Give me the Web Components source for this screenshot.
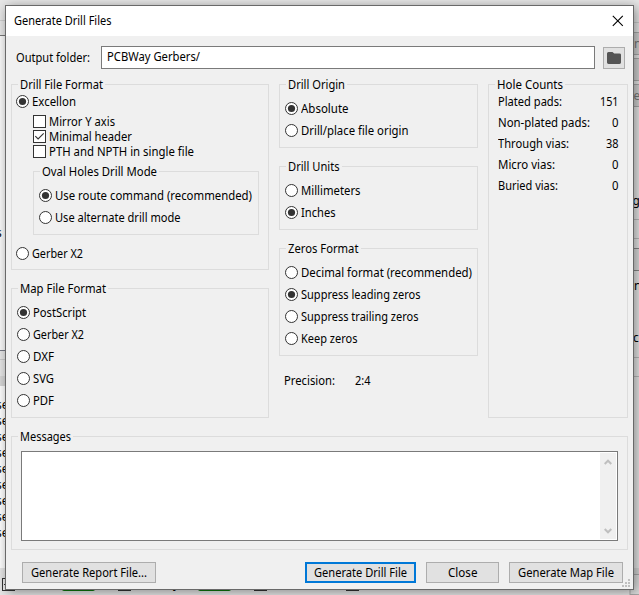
<!DOCTYPE html>
<html lang="en"><head><meta charset="utf-8"><title>Generate Drill Files</title>
<style>
html,body{margin:0;height:100%;overflow:hidden}
body{position:relative;width:639px;height:595px;background:#e6e6e6;color:#000;font:12px/15px "Noto Sans","Open Sans",sans-serif}
</style></head><body>
<parent-window></parent-window>
<drill-dialog></drill-dialog>
<script>
const define=(name,html,after)=>customElements.define(name,class extends HTMLElement{
  connectedCallback(){
    if(this.shadowRoot)return;
    const t=document.createElement('template');
    t.innerHTML=typeof html==='function'?html(this):html;
    this.attachShadow({mode:'open'}).append(t.content.cloneNode(true));
    if(after)after(this);
  }
});

// A one-line label, condensed so that it spans the width in its "w" attribute.
define('ui-text',e=>`<style>:host{display:block;flex:none;white-space:pre;height:16px}span{display:inline-block;margin-top:-1px;transform-origin:0 50%}</style><span>${e.getAttribute('t')}</span>`,e=>{
  const s=e.shadowRoot.querySelector('span'),w=+e.getAttribute('w');
  if(w){const n=s.getBoundingClientRect().width;s.style.transform=`scaleX(${w/n})`;e.style.width=w+'px';}
});

define('ui-group',e=>`<style>
:host{display:flex;flex-direction:column;box-sizing:border-box;border:1px solid #dcdcdc;min-width:0}
.legend{align-self:flex-start;height:15px;margin:-8px 0 0 6px;padding:0 2px 0 2px;background:#f0f0f0;display:flex}
</style><div class="legend"><ui-text t="${e.getAttribute('label')}" w="${e.getAttribute('w')}"></ui-text></div><slot></slot>`);

define('ui-radio',e=>`<style>
:host{display:flex;align-items:center;height:22px;flex:none}
svg{flex:none;margin:0 3px 1px 0}
</style><svg width="13" height="13" viewBox="0 0 13 13"><circle cx="6.5" cy="6.5" r="6" fill="#fff" stroke="#333"/>${e.hasAttribute('on')?'<circle cx="6.5" cy="6.5" r="3.6" fill="#333"/>':''}</svg><ui-text t="${e.getAttribute('t')}" w="${e.getAttribute('w')}"></ui-text>`);

define('ui-check',e=>`<style>
:host{display:flex;align-items:center;height:15px;flex:none}
svg{flex:none;margin-right:3px}
ui-text{margin-top:1px}
</style><svg width="13" height="13" viewBox="0 0 13 13"><rect x=".5" y=".5" width="12" height="12" fill="#fff" stroke="#333"/>${e.hasAttribute('on')?'<path d="M2.3 6.2l2.8 2.8 5.6-5.6" fill="none" stroke="#333" stroke-width="1.1"/>':''}</svg><ui-text t="${e.getAttribute('t')}" w="${e.getAttribute('w')}"></ui-text>`);

define('ui-button',e=>`<style>
:host{display:flex;justify-content:center;align-items:center;box-sizing:border-box;height:21px;padding-top:1px;background:#e1e1e1;border:1px solid #adadad;flex:none}
:host([primary]){border:2px solid #0078d7}
</style><ui-text t="${e.getAttribute('t')}" w="${e.getAttribute('w')}"></ui-text>`);

define('count-row',e=>`<style>
:host{display:flex;justify-content:space-between;align-items:center;box-sizing:border-box;height:21px;padding:0 9px 1px 9px}
</style><ui-text t="${e.getAttribute('t')}" w="${e.getAttribute('w')}"></ui-text><ui-text t="${e.getAttribute('v')}" w="${e.getAttribute('vw')}"></ui-text>`);

define('message-box',`<style>
:host{display:flex;justify-content:flex-end;box-sizing:border-box;border:1px solid #7a7a7a;background:#fff;padding:1px}
.bar{width:16px;background:#f0f0f0;display:flex;flex-direction:column;justify-content:space-between;align-items:center;padding:6px 0 5px;box-sizing:border-box}
</style><div class="bar"><svg width="8" height="6"><path d="M.7 5L4 1.7 7.3 5" fill="none" stroke="#bfbfbf" stroke-width="2"/></svg><svg width="8" height="6"><path d="M.7 1L4 4.3 7.3 1" fill="none" stroke="#bfbfbf" stroke-width="2"/></svg></div>`);

// The window behind the dialog: only its margins are visible.
define('parent-window',()=>{
  let rows='';
  for(let i=0;i<9;i++)rows+=`<text x="-4" y="${409+i*16}">se</text>`;
  return `<style>:host{display:block;width:639px;height:595px}svg{display:block}text{font:12px "Noto Sans",sans-serif;fill:#000}</style>
<svg width="639" height="595">
<rect width="639" height="595" fill="#e7e7e7"/>
<rect y="20" width="6" height="1" fill="#cfcfcf"/>
<rect y="35" width="6" height="316" fill="#fafafa"/><rect y="35" width="6" height="1" fill="#777"/>
<rect y="350" width="6" height="1" fill="#777985"/><rect y="359" width="6" height="1" fill="#ccc"/><rect y="376" width="6" height="10" fill="#d8d8d8"/>
<rect y="386" width="6" height="182" fill="#fff"/>
<text x="-4" y="237">s</text>${rows}
<rect x="2.5" y="578.5" width="12" height="12" fill="#eee" stroke="#333"/><path d="M4 584l3 3" stroke="#333"/>
<rect x="118.5" y="578.5" width="12" height="12" fill="#eee" stroke="#333"/>
<rect x="254.5" y="578.5" width="12" height="12" fill="#eee" stroke="#333"/>
<rect x="346.5" y="578.5" width="12" height="12" fill="#eee" stroke="#333"/>
<rect x="62" y="576" width="33" height="15" rx="2" fill="#0b7a0b"/><rect x="198" y="576" width="33" height="15" rx="2" fill="#0b7a0b"/>
<text x="173" y="588">y</text>
<rect x="634" y="22" width="5" height="1" fill="#ccc"/>
<g fill="#d2d2d2" stroke="#aaa"><rect x="630" y="32.5" width="20" height="22"/><rect x="630" y="58.5" width="20" height="22"/><rect x="630" y="84.5" width="20" height="22"/></g>
<text x="634" y="48" style="fill:#777">n</text><text x="633.5" y="100" style="fill:#777">e</text>
<text x="632.5" y="205">g</text>
<rect x="634" y="219" width="5" height="1" fill="#bbb"/><rect x="634" y="238" width="5" height="1" fill="#bbb"/>
<rect x="630" y="248.5" width="20" height="22" fill="#ddd" stroke="#888"/>
<text x="634" y="290">n</text><text x="633" y="342">co</text>
<rect x="634" y="357" width="5" height="1" fill="#bbb"/><rect x="634" y="376" width="5" height="1" fill="#bbb"/>
<rect x="634" y="568" width="5" height="27" fill="#d5d5d5"/>
<rect x="630" y="574.5" width="20" height="20" fill="#ddd" stroke="#aaa"/>
</svg>`});

define('drill-dialog',`<style>
:host{position:absolute;left:5px;top:5px;width:629px;height:585px;box-sizing:border-box;border:1px solid #696969;background:#f0f0f0;box-shadow:2px 2px 11px rgba(0,0,0,.42);display:flex;flex-direction:column}
header{height:30px;background:#fff;display:flex;align-items:center;justify-content:space-between;padding:0 9px 0 8px;flex:none}
.path{display:flex;align-items:center;height:23px;padding:10px 8px 0 10px;flex:none}
.path>ui-text{margin-top:1px}
.input{box-sizing:border-box;width:494px;height:23px;border:1px solid #7a7a7a;background:#fff;padding:2px 5px 0;margin-left:11px;flex:none}
.browse{box-sizing:border-box;width:22px;height:22px;margin:1px 0 0 8px;border:1px solid #adadad;background:#e1e1e1;display:flex;align-items:center;justify-content:center;flex:none}
.cols{display:grid;grid-template-columns:258px 199px 140px;column-gap:10px;padding:15px 5px 0;height:334px;flex:none}
.col{display:flex;flex-direction:column;gap:18px}
.checks{padding:2px 0 0 21px}
.prec{display:flex;padding:0 5px;margin-top:-1px}
.prec ui-text+ui-text{margin-left:20px}
.msgs{margin:18px 5px 0;height:114px;flex:none}
message-box{height:90px;margin:7px 9px 0}
footer{display:flex;gap:10px;padding:12px 10px 0 16px;height:21px}
.grip{position:absolute;right:3px;bottom:2px}
</style>
<header><ui-text t="Generate Drill Files" w="97.5"></ui-text><svg width="12" height="12"><path d="M.8.8l10 10M10.8.8l-10 10" stroke="#000" stroke-width="1.1"/></svg></header>
<div class="path"><ui-text t="Output folder:" w="74"></ui-text><div class="input"><ui-text t="PCBWay Gerbers/" w="93"></ui-text></div>
<div class="browse"><svg width="14" height="12"><path d="M1.5 0H5.5L7.2 1.4H12.5Q14 1.4 14 2.8V10.6Q14 12 12.5 12H1.5Q0 12 0 10.6V1.5Q0 0 1.5 0Z" fill="#545454"/></svg></div></div>
<div class="cols">
 <div class="col">
  <ui-group label="Drill File Format" w="83" style="height:186px">
   <ui-radio on t="Excellon" w="44" style="height:20px;margin-left:4px"></ui-radio>
   <div class="checks"><ui-check t="Mirror Y axis" w="66"></ui-check><ui-check on t="Minimal header" w="83"></ui-check><ui-check t="PTH and NPTH in single file" w="145"></ui-check></div>
   <ui-group label="Oval Holes Drill Mode" w="115" style="margin:12px 9px 0 21px;height:64px;flex:none">
    <ui-radio on t="Use route command (recommended)" w="197" style="margin:6px 0 0 5px"></ui-radio><ui-radio t="Use alternate drill mode" w="125.5" style="margin-left:5px"></ui-radio>
   </ui-group>
   <ui-radio t="Gerber X2" w="51" style="margin:8px 0 0 4px"></ui-radio>
  </ui-group>
  <ui-group label="Map File Format" w="86" style="height:130px">
   <ui-radio on t="PostScript" w="53" style="margin:6px 0 0 5px"></ui-radio><ui-radio t="Gerber X2" w="51" style="margin-left:5px"></ui-radio><ui-radio t="DXF" w="21" style="margin-left:5px"></ui-radio><ui-radio t="SVG" w="21" style="margin-left:5px"></ui-radio><ui-radio t="PDF" w="21" style="margin-left:5px"></ui-radio>
  </ui-group>
 </div>
 <div class="col">
  <ui-group label="Drill Origin" w="57" style="height:64px"><ui-radio on t="Absolute" w="47.5" style="margin:6px 0 0 5px"></ui-radio><ui-radio t="Drill/place file origin" w="107.5" style="margin-left:5px"></ui-radio></ui-group>
  <ui-group label="Drill Units" w="51.5" style="height:64px"><ui-radio t="Millimeters" w="59.5" style="margin:6px 0 0 5px"></ui-radio><ui-radio on t="Inches" w="34.5" style="margin-left:5px"></ui-radio></ui-group>
  <ui-group label="Zeros Format" w="70.5" style="height:108px"><ui-radio t="Decimal format (recommended)" w="171" style="margin:6px 0 0 5px"></ui-radio><ui-radio on t="Suppress leading zeros" w="119.5" style="margin-left:5px"></ui-radio><ui-radio t="Suppress trailing zeros" w="117.5" style="margin-left:5px"></ui-radio><ui-radio t="Keep zeros" w="56.5" style="margin-left:5px"></ui-radio></ui-group>
  <div class="prec"><ui-text t="Precision:" w="51"></ui-text><ui-text t="2:4" w="15.5"></ui-text></div>
 </div>
 <ui-group label="Hole Counts" w="66">
  <count-row t="Plated pads:" w="64" v="151" vw="18.5"></count-row><count-row t="Non-plated pads:" w="92" v="0" vw="6.5"></count-row><count-row t="Through vias:" w="71" v="38" vw="12.5"></count-row><count-row t="Micro vias:" w="57" v="0" vw="6.5"></count-row><count-row t="Buried vias:" w="60" v="0" vw="6.5"></count-row>
 </ui-group>
</div>
<ui-group class="msgs" label="Messages" w="51"><message-box></message-box></ui-group>
<footer><ui-button t="Generate Report File..." w="116" style="width:134px;margin-right:139px"></ui-button><ui-button primary t="Generate Drill File" w="93" style="width:111px"></ui-button><ui-button t="Close" w="29.5" style="width:73px"></ui-button><ui-button t="Generate Map File" w="96" style="width:114px"></ui-button></footer>
<svg class="grip" width="8" height="8" fill="#bfbfbf"><path d="M6 0h2v2H6zM3 3h2v2H3zM6 3h2v2H6zM0 6h2v2H0zM3 6h2v2H3zM6 6h2v2H6z"/></svg>`);
</script>
</body></html>
